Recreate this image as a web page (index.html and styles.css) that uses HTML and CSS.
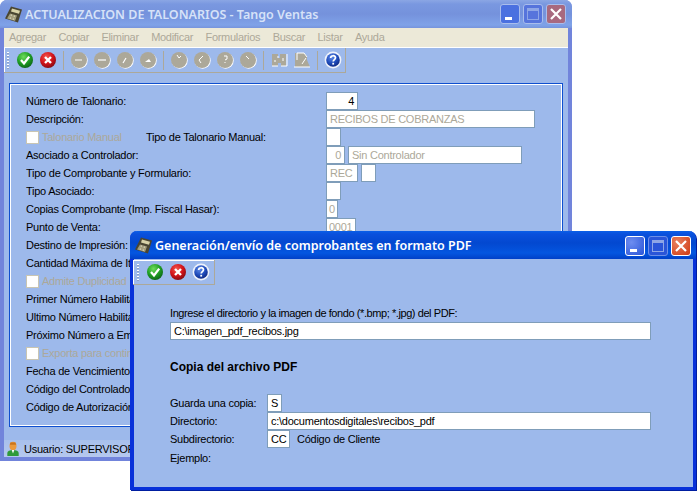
FILE: index.html
```html
<!DOCTYPE html>
<html lang="es">
<head>
<meta charset="utf-8">
<title>Tango Ventas</title>
<link rel="stylesheet" href="styles.css">
</head>
<body>
<svg class="defs" width="0" height="0" aria-hidden="true">
  <defs>
    <radialGradient id="gGreen" cx="40%" cy="30%" r="75%"><stop offset="0" stop-color="#6fdc5c"/><stop offset=".55" stop-color="#1f9e23"/><stop offset="1" stop-color="#0b5f14"/></radialGradient>
    <radialGradient id="gRed" cx="40%" cy="30%" r="75%"><stop offset="0" stop-color="#f2554c"/><stop offset=".55" stop-color="#d3121a"/><stop offset="1" stop-color="#7e0a10"/></radialGradient>
    <radialGradient id="gBlue" cx="40%" cy="30%" r="75%"><stop offset="0" stop-color="#5f8be8"/><stop offset=".6" stop-color="#1d49b8"/><stop offset="1" stop-color="#10277c"/></radialGradient>
    <symbol id="i-ok" viewBox="0 0 18 18"><circle cx="9" cy="9" r="8" fill="url(#gGreen)"/><path d="M5 9l3 3.400L13.200 5.600" fill="none" stroke="#fff" stroke-width="2.300"/></symbol>
    <symbol id="i-no" viewBox="0 0 18 18"><circle cx="9" cy="9" r="8" fill="url(#gRed)"/><path d="M6 6l6 6M12 6l-6 6" fill="none" stroke="#fff" stroke-width="2.400"/></symbol>
    <symbol id="i-help" viewBox="0 0 18 18"><circle cx="9" cy="9" r="8.400" fill="#eef2fb"/><circle cx="9" cy="9" r="6.800" fill="url(#gBlue)"/><path d="M6.600 7c.2-3 4.900-3 4.900-.2 0 1.800-2.300 1.900-2.300 3.800" fill="none" stroke="#fff" stroke-width="1.700"/><rect x="8.300" y="11.800" width="1.800" height="1.800" fill="#fff"/></symbol>
    <symbol id="i-dis" viewBox="0 0 18 18"><circle cx="9.700" cy="9.700" r="8" fill="#fff"/><circle cx="9" cy="9" r="8" fill="#aca899"/></symbol>
    <symbol id="i-title" viewBox="0 0 18 18"><path d="M6 1l11 3-4 13L0 13z" fill="#4a4632"/><path d="M7 3l8 2.200-1 3-8-2.200z" fill="#d9d3a8"/><path d="M5 8l7 2-2 5.500-8-2.500z" fill="#a39d7c"/><path d="M6 9l1 .3-.4 1-1-.3zM9 10l1 .3-.4 1-1-.3zM5 12l1 .3-.4 1-1-.3zM8 13l1 .3-.4 1-1-.3z" fill="#f2efdc"/></symbol>
    <symbol id="i-user" viewBox="0 0 16 18"><ellipse cx="8" cy="5.500" rx="4" ry="4.800" fill="#eb9a3c"/><path d="M4.500 4h7l-.6-2.500H5z" fill="#c9741e"/><path d="M1.500 17v-3c0-3 3-4 6.500-4s6.500 1 6.500 4v3z" fill="#2f9a3a"/><path d="M6.500 10h3l-1.500 4z" fill="#fff"/></symbol>
  </defs>
</svg>

<section class="win win-back">
  <header class="title title-back">
    <svg class="title-icon"><use href="#i-title"/></svg>
    <span class="title-text">ACTUALIZACION DE TALONARIOS - Tango Ventas</span>
    <span class="caps">
      <span class="cap cap-min"><i class="g-min"></i></span>
      <span class="cap cap-max"><i class="g-max"></i></span>
      <span class="cap cap-close"><svg viewBox="0 0 12 12"><path d="M1 1l10 10M11 1L1 11" stroke="#fff" stroke-width="2.200"/></svg></span>
    </span>
  </header>
  <nav class="menu">
    <span>Agregar</span><span>Copiar</span><span>Eliminar</span><span>Modificar</span><span>Formularios</span><span>Buscar</span><span>Listar</span><span>Ayuda</span>
  </nav>
  <div class="toolwrap">
    <div class="toolbar">
      <i class="grip"></i>
      <svg class="tb"><use href="#i-ok"/></svg>
      <svg class="tb"><use href="#i-no"/></svg>
      <i class="sep"></i>
      <svg class="tb" viewBox="0 0 18 18"><use href="#i-dis" width="18" height="18"/><path d="M5 9h7" stroke="#fff"/></svg>
      <svg class="tb" viewBox="0 0 18 18"><use href="#i-dis" width="18" height="18"/><path d="M5 9h8" stroke="#fff" stroke-width="1.200"/></svg>
      <svg class="tb" viewBox="0 0 18 18"><use href="#i-dis" width="18" height="18"/><path d="M7 12l3-5" stroke="#fff" stroke-width="1.200"/></svg>
      <svg class="tb" viewBox="0 0 18 18"><use href="#i-dis" width="18" height="18"/><path d="M6 11l4-3 2 3z" fill="#fff"/></svg>
      <i class="sep"></i>
      <svg class="tb" viewBox="0 0 18 18"><use href="#i-dis" width="18" height="18"/><path d="M7 4l2 3 2-2" stroke="#fff" fill="none"/></svg>
      <svg class="tb" viewBox="0 0 18 18"><use href="#i-dis" width="18" height="18"/><path d="M10 5L6 9l2 3" stroke="#fff" fill="none"/></svg>
      <svg class="tb" viewBox="0 0 18 18"><use href="#i-dis" width="18" height="18"/><path d="M8 5h3v3l-2 1M9 11v1" stroke="#fff" fill="none"/></svg>
      <svg class="tb" viewBox="0 0 18 18"><use href="#i-dis" width="18" height="18"/><path d="M7 5l3 3" stroke="#fff" fill="none"/></svg>
      <i class="sep"></i>
      <svg class="tb" viewBox="0 0 18 18"><path d="M2 3h6v4h2V3h6v12h-5v-3H8v3H2z" fill="#aca899"/><path d="M2 15h6M11 15h6M17 3v12M8 5v2M5 9v2M13 7v3" stroke="#fff" fill="none"/></svg>
      <svg class="tb" viewBox="0 0 18 18"><path d="M3 2h8l3 3v4l3 7H2V2z" fill="#aca899"/><path d="M4 2h7l3 4M4 2v7M9 13l4-6M1 16h16" stroke="#fff" fill="none"/></svg>
      <i class="sep"></i>
      <svg class="tb"><use href="#i-help"/></svg>
    </div>
  </div>
  <main class="panel">
    <div class="form">
      <div class="row"><label>Número de Talonario:</label><span class="fld w32 right">4</span></div>
      <div class="row"><label>Descripción:</label><span class="fld w209 ro">RECIBOS DE COBRANZAS</span></div>
      <div class="row"><label class="chk dis"><i class="box"></i>Talonario Manual</label><label class="tipo">Tipo de Talonario Manual:</label><span class="fld w15"></span></div>
      <div class="row"><label>Asociado a Controlador:</label><span class="fld w19 right ro">0</span><span class="fld w174 ro">Sin Controlador</span></div>
      <div class="row"><label>Tipo de Comprobante y Formulario:</label><span class="fld w32 ro">REC</span><span class="fld w15"></span></div>
      <div class="row"><label>Tipo Asociado:</label><span class="fld w15"></span></div>
      <div class="row"><label>Copias Comprobante (Imp. Fiscal Hasar):</label><span class="fld w12 ro">0</span></div>
      <div class="row"><label>Punto de Venta:</label><span class="fld w30 ro">0001</span></div>
      <div class="row"><label>Destino de Impresión:</label></div>
      <div class="row"><label>Cantidad Máxima de Items:</label></div>
      <div class="row"><label class="chk dis"><i class="box"></i>Admite Duplicidad</label></div>
      <div class="row"><label>Primer Número Habilitado:</label></div>
      <div class="row"><label>Ultimo Número Habilitado:</label></div>
      <div class="row"><label>Próximo Número a Emitir:</label></div>
      <div class="row"><label class="chk dis"><i class="box"></i>Exporta para contingencia</label></div>
      <div class="row"><label>Fecha de Vencimiento CAI:</label></div>
      <div class="row"><label>Código del Controlador:</label></div>
      <div class="row"><label>Código de Autorización:</label></div>
    </div>
  </main>
  <footer class="status">
    <svg class="user"><use href="#i-user"/></svg>
    <span>Usuario: SUPERVISOR</span>
  </footer>
</section>

<section class="win win-front">
  <header class="title title-front">
    <svg class="title-icon"><use href="#i-title"/></svg>
    <span class="title-text">Generación/envío de comprobantes en formato PDF</span>
    <span class="caps">
      <span class="cap cap-min on"><i class="g-min"></i></span>
      <span class="cap cap-max on"><i class="g-max"></i></span>
      <span class="cap cap-close on"><svg viewBox="0 0 12 12"><path d="M1 1l10 10M11 1L1 11" stroke="#fff" stroke-width="2.200"/></svg></span>
    </span>
  </header>
  <div class="toolbar toolbar-front">
    <i class="grip"></i>
    <svg class="tb"><use href="#i-ok"/></svg>
    <svg class="tb"><use href="#i-no"/></svg>
    <svg class="tb"><use href="#i-help"/></svg>
  </div>
  <main class="pdf">
    <p class="lead">Ingrese el directorio y la imagen de fondo (*.bmp; *.jpg) del PDF:</p>
    <span class="fld full">C:\imagen_pdf_recibos.jpg</span>
    <h2 class="section">Copia del archivo PDF</h2>
    <div class="prow"><label>Guarda una copia:</label><span class="fld w15b">S</span></div>
    <div class="prow"><label>Directorio:</label><span class="fld grow">c:\documentosdigitales\recibos_pdf</span></div>
    <div class="prow"><label>Subdirectorio:</label><span class="fld w23">CC</span><span class="note">Código de Cliente</span></div>
    <div class="prow ej"><label>Ejemplo:</label></div>
  </main>
</section>
</body>
</html>
```
FILE: styles.css
```css
* { box-sizing: border-box; }
html, body { margin: 0; height: 100%; background: #fff; overflow: hidden; }
body { position: relative; font: 11px/18px "Liberation Sans", sans-serif; letter-spacing: -.25px; color: #000; }
.defs { position: absolute; }

.win { position: absolute; display: flex; flex-direction: column; background: #9db9eb; border-radius: 7px 7px 0 0; }
.win-back { left: 0; top: 0; width: 572px; height: 461px; border: solid #7184db; border-width: 0 4px 4px; }
.win-front { left: 130px; top: 231px; width: 566px; height: 259px; border: solid #0831d9; border-width: 0 3px 3px 4px; box-shadow: 1px 1px 0 #001ea0; }

.title { display: flex; align-items: center; height: 28px; margin: 0 -4px; padding: 0 6px 0 5px; flex: none; border-radius: 7px 7px 0 0; font-family: "Noto Sans", sans-serif; font-weight: 600; letter-spacing: 0; }
.title-back { background: linear-gradient(#8ba6e4 0, #7a98e0 4px, #7592dc 14px, #7fa2e8 25px, #7694dc 28px); color: #d6e2f8; }
.title-front { margin: 0 -3px 0 -4px; padding-right: 5px; background: linear-gradient(#0a5fe8 0, #0a50dc 3px, #0348d0 12px, #0456e0 22px, #0040c8 28px); color: #fff; }
.title-front .caps { margin-top: 2px; }
.title-icon { width: 18px; height: 19px; flex: none; margin-right: 2px; }
.title-text { flex: 1; padding-top: 2px; font-size: 12.500px; white-space: nowrap; }
.caps { display: flex; gap: 3px; }
.cap { display: flex; align-items: center; justify-content: center; position: relative; width: 20px; height: 20px; border: 1px solid #a9bdec; border-radius: 3px; background: #4a70e0; }
.cap.on { border-color: #fff; background: radial-gradient(circle at 30% 30%, #6d8df0, #2a55d8); }
.cap-max { background: #5674dc; }
.cap-max.on { background: #2a55d8; border-color: #6c8fe8; }
.cap-close { background: #a8697f; }
.cap-close.on { background: radial-gradient(circle at 30% 30%, #e88060, #d03a12); }
.cap svg { width: 12px; height: 12px; }
.g-min { position: absolute; left: 4px; bottom: 3px; width: 7px; height: 3px; background: #fff; }
.g-max { width: 12px; height: 12px; border: 1px solid #8ea6e6; border-top-width: 3px; }

.menu { display: flex; gap: 12.400px; flex: none; height: 19px; padding-left: 5px; background: #ece9d8; color: #aca899; font-size: 11px; line-height: 19px; letter-spacing: -.3px; }

.toolwrap { flex: none; height: 26px; border-top: 1px solid #fff; }
.toolbar { display: flex; align-items: center; width: 342px; height: 25px; padding-left: 3px; border: solid #aca899; border-width: 0 1px 1px 0; box-shadow: inset 1px 0 #fff; }
.grip { width: 2px; height: 17px; margin-right: 4.500px; background: repeating-linear-gradient(#fff 0 1px, #8d9fc8 1px 2px, transparent 2px 3px); }
.tb { width: 18px; height: 18px; margin: 0 2.500px; flex: none; }
.sep { width: 1px; height: 19px; margin: 0 3.500px; background: #aca899; }

.panel { flex: 1; margin: 10px 5px 13px; border: 1px solid #0e4fcf; box-shadow: inset 1px 1px #fff, inset -1px -1px #fff; padding: 8px 0 0 16px; }
.row { display: flex; align-items: center; height: 18px; }
.row label { width: 300px; flex: none; white-space: nowrap; }
.row .chk { display: flex; align-items: center; width: 120px; }
.row .tipo { width: 180px; }
.dis { color: #aca899; }
.box { width: 13px; height: 13px; flex: none; margin-right: 3px; background: #fff; border: 1px solid #c9c5b2; }
.fld { display: block; height: 18px; padding: 0 3px; background: #fff; border: 1px solid #7f9db9; white-space: nowrap; line-height: 16px; }
.row .fld + .fld { margin-left: 3px; }
.right { text-align: right; }
.ro { color: #aca899; }
.w12 { width: 12px; padding: 0 2px; } .w15 { width: 15px; } .w19 { width: 19px; } .w30 { width: 30px; padding: 0 2px; } .w32 { width: 32px; } .w174 { width: 174px; } .w209 { width: 209px; }

.status { flex: none; display: flex; align-items: center; height: 17px; padding-left: 2px; background: linear-gradient(#a8c0ec, #b5c8ee); }
.user { width: 14px; height: 16px; margin-right: 4px; }

.toolbar-front { width: 82px; margin: 1px 0 0 -1px; height: 25px; padding-left: 4px; box-shadow: inset 1px 1px #fff; flex: none; }
.pdf { flex: 1; padding: 20px 42px 0 36px; }
.lead { margin: 0; line-height: 17px; letter-spacing: -.42px; }
.full { width: 481px; }
.section { margin: 18px 0; font-size: 12px; line-height: 18px; font-weight: 700; letter-spacing: 0; }
.prow { display: flex; align-items: center; height: 18px; }
.prow label { width: 97px; flex: none; }
.w15b { width: 15px; }
.w23 { width: 23px; }
.grow { flex: 1; }
.note { margin-left: 7px; }
.ej { margin-top: 1px; }
```
